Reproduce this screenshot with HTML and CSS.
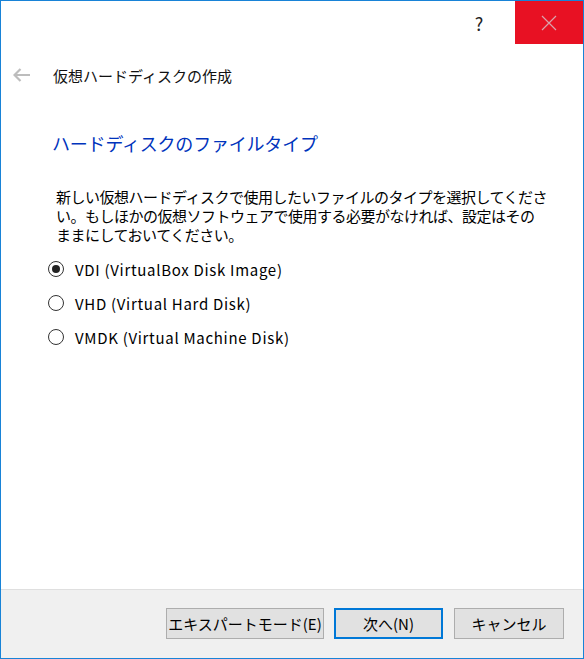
FILE: index.html
```html
<!DOCTYPE html>
<html lang="ja">
<head>
    <meta charset="UTF-8">
    <title>仮想ハードディスクの作成</title>
    <link rel="stylesheet" href="styles.css">
</head>
<body>

<div class="window">
    <div class="titlebar">
        <div class="help">?</div>
        <div class="close">
            <svg width="16" height="16" viewBox="0 0 16 16"><path d="M1 1 L15 15 M15 1 L1 15" stroke="#d9a3ab" stroke-width="1.2" fill="none"/></svg>
        </div>
    </div>

    <div class="nav">
        <svg class="back" width="18" height="14" viewBox="0 0 18 14"><path d="M1.5 7 H17 M7.5 1 L1.5 7 L7.5 13" stroke="#bdbdbd" stroke-width="2.2" fill="none"/></svg>
        <span class="nav-title">仮想ハードディスクの作成</span>
    </div>

    <div class="content">
        <h1>ハードディスクのファイルタイプ</h1>
        <p class="desc">新しい仮想ハードディスクで使用したいファイルのタイプを選択してくださ<br>い。もしほかの仮想ソフトウェアで使用する必要がなければ、設定はその<br>ままにしておいてください。</p>

        <div class="options">
            <label class="option"><span class="radio checked"></span>VDI (VirtualBox Disk Image)</label>
            <label class="option"><span class="radio"></span>VHD (Virtual Hard Disk)</label>
            <label class="option"><span class="radio"></span>VMDK (Virtual Machine Disk)</label>
        </div>
    </div>

    <div class="footer">
        <button class="btn btn-expert">エキスパートモード(E)</button>
        <button class="btn btn-next">次へ(N)</button>
        <button class="btn btn-cancel">キャンセル</button>
    </div>
</div>

</body>
</html>
```

FILE: styles.css
```css
body { margin: 0; padding: 0; font-family: "Noto Sans CJK JP", "Noto Sans", sans-serif; color: #000; background: #fff; }
.window { width: 584px; height: 659px; box-sizing: border-box; border: 1px solid #1883d7; display: flex; flex-direction: column; background: #fff; }

.titlebar { height: 43px; display: flex; justify-content: flex-end; }
.help { width: 72px; display: flex; align-items: center; justify-content: center; font-size: 18px; color: #222; }
.close { width: 68px; background: #e81123; display: flex; align-items: center; justify-content: center; }

.nav { height: 62px; display: flex; align-items: center; padding-left: 12px; }
.back { margin-right: 22px; }
.nav-title { font-size: 15px; color: #111; }

.content { padding: 0 10px 0 51px; }
h1 { margin: 23px 0 0; font-size: 18px; font-weight: normal; color: #0033bc; line-height: 28px; letter-spacing: -0.2px; }
.desc { margin: 30px 0 0 4px; font-size: 15px; line-height: 19px; letter-spacing: -0.5px; white-space: nowrap; }

.options { margin: 13px 0 0 -4px; display: flex; flex-direction: column; gap: 10px; }
.option { display: flex; align-items: center; height: 24px; font-size: 15px; letter-spacing: 0.7px; }
.radio { width: 14px; height: 14px; border: 1px solid #333; border-radius: 50%; margin-right: 11px; position: relative; }
.radio.checked::after { content: ""; position: absolute; left: 3px; top: 3px; width: 8px; height: 8px; border-radius: 50%; background: #222; }

.footer { margin-top: auto; height: 69px; box-sizing: border-box; border-top: 1px solid #dfdfdf; background: #f0f0f0; display: flex; justify-content: flex-end; align-items: flex-start; padding: 18px 19px 0 0; gap: 10px; }
.btn { height: 31px; box-sizing: border-box; background: #e1e1e1; border: 1px solid #adadad; font-family: inherit; font-size: 15px; color: #000; padding: 0; }
.btn-expert { width: 158px; }
.btn-next { width: 109px; border: 2px solid #0078d7; }
.btn-cancel { width: 110px; margin-left: 1px; }
```
